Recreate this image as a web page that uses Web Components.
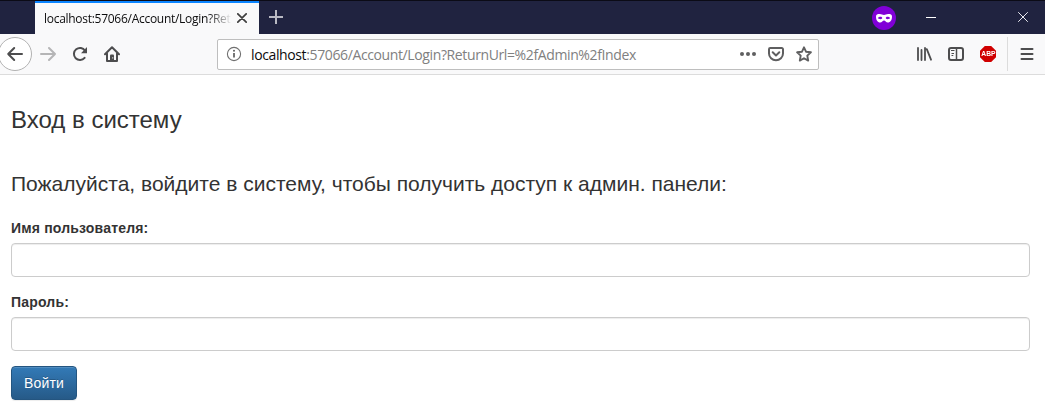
<!DOCTYPE html>
<html lang="ru">
<head>
<meta charset="utf-8">
<title>Вход в систему</title>
<style>
html, body { margin: 0; height: 100%; background: #fff; overflow: hidden; }
body { font-family: "Liberation Sans", Arial, sans-serif; color: #333; }
</style>
</head>
<body>
<browser-window>
  <title-bar slot="chrome"><browser-tab>localhost:57066/Account/Login?Ret</browser-tab></title-bar>
  <nav-bar slot="chrome"><url-field host="localhost" path=":57066/Account/Login?ReturnUrl=%2fAdmin%2fIndex"></url-field></nav-bar>
  <login-form>
    <form-field label="Имя пользователя:"></form-field>
    <form-field label="Пароль:" type="password"></form-field>
    <primary-button>Войти</primary-button>
  </login-form>
</browser-window>
<script>
function define(name, html, setup) {
  customElements.define(name, class extends HTMLElement {
    constructor() {
      super();
      this.attachShadow({ mode: 'open' }).innerHTML = html;
    }
    connectedCallback() { if (setup) setup(this, this.shadowRoot); }
  });
}

const icons = {
  back: [33, 36, '<circle cx="15" cy="18" r="16.5" fill="#fff" stroke="#b2b2b2"/><path d="M22 18H8.2M14.2 12L8.2 18l6 6" fill="none" stroke="#4d4d4e" stroke-width="2" stroke-linecap="round" stroke-linejoin="round"/>'],
  forward: [16, 16, '<path d="M1 8h14M9 2l6 6-6 6" fill="none" stroke="#b5b5b6" stroke-width="2" stroke-linecap="round" stroke-linejoin="round"/>'],
  reload: [16, 16, '<path d="M12.6 11.8A6 6 0 1 1 13 4.8" fill="none" stroke="#4d4d4e" stroke-width="2" stroke-linecap="round"/><path d="M15 1v6.2H9z" fill="#4d4d4e"/>'],
  home: [16, 16, '<path d="M1 8.2L8 1.3l7 6.9M3 7.5V15h10V7.5" fill="none" stroke="#4d4d4e" stroke-width="2" stroke-linecap="round" stroke-linejoin="round"/><path d="M6 15v-5.5a1 1 0 0 1 1-1h2a1 1 0 0 1 1 1V15z" fill="#4d4d4e"/><path d="M8.3 11.2h.9v1.2h-.9z" fill="#fff"/>'],
  info: [16, 16, '<circle cx="8" cy="8" r="6.6" fill="none" stroke="#707070" stroke-width="1.1"/><path d="M8 7v4.6" stroke="#666" stroke-width="1.8"/><circle cx="8" cy="4.8" r="1.05" fill="#666"/>'],
  dots: [16, 16, '<g fill="#5f5f60"><circle cx="2" cy="8" r="2"/><circle cx="8" cy="8" r="2"/><circle cx="14" cy="8" r="2"/></g>'],
  pocket: [16, 16, '<path d="M2.2 2h11.6a1.2 1.2 0 0 1 1.2 1.2V7.5a7 6.7 0 0 1-14 0V3.2A1.2 1.2 0 0 1 2.2 2zM4.7 6.300L8 9.400l3.300-3.100" fill="none" stroke="#5f5f60" stroke-width="2" stroke-linecap="round" stroke-linejoin="round"/>'],
  star: [16, 16, '<path d="M8 1.300l2 4.400 4.900.6-3.600 3.300.9 5L8 12.200l-4.200 2.400.9-5L1.100 6.300 6 5.700z" fill="none" stroke="#5f5f60" stroke-width="1.900" stroke-linejoin="round"/>'],
  library: [16, 16, '<path d="M2 2v12M5.500 4v10M9 2v12M10.800 3.200L15 13.700" fill="none" stroke="#4d4d4e" stroke-width="1.800" stroke-linecap="round"/>'],
  sidebar: [16, 16, '<rect x="1" y="2" width="14" height="12" rx="2" fill="none" stroke="#4d4d4e" stroke-width="2"/><path d="M8.500 2v12" stroke="#4d4d4e" stroke-width="1.500"/><path d="M3 4.500h3.500M3.500 7.500h2.500M3.500 9.500h1.800" stroke="#4d4d4e"/>'],
  menu: [14, 14, '<path d="M1.500 2h11M1.500 7h11M1.500 12h11" stroke="#4d4d4e" stroke-width="2" stroke-linecap="round"/>'],
  close: [10, 10, '<path d="M.8.8l8.400 8.400M9.200.8L.8 9.200" stroke="#3e3e3e" stroke-width="1.700" stroke-linecap="round"/>'],
  plus: [14, 14, '<path d="M7 0v14M0 7h14" stroke="#b9b9c3" stroke-width="2"/>'],
  mask: [24, 24, '<circle cx="12" cy="12" r="12" fill="#8000d7"/><path fill="#fff" fill-rule="evenodd" d="M4 10.500C4 8.400 5.400 8 7.800 8c1.900 0 2.700 1 4.200 1s2.300-1 4.200-1c2.400 0 3.800.4 3.800 2.500 0 3.600-1.600 6-4.200 6-1.700 0-2.600-2-3.800-2s-2.100 2-3.800 2C5.600 16.500 4 14.100 4 10.500zM8.500 10.800c-1.200 0-2.200.6-2.700 1.300.5.700 1.500 1.100 2.700 1.100s1.700-.5 1.700-1.100c0-.7-.5-1.300-1.700-1.300zm7 0c-1.200 0-1.700.6-1.700 1.300 0 .6.500 1.100 1.700 1.100s2.200-.4 2.700-1.100c-.5-.7-1.500-1.300-2.700-1.300z"/>'],
  minimize: [10, 10, '<path d="M0 4.500h10" stroke="#fff"/>'],
  exit: [10, 10, '<path d="M.2.2l9.600 9.600M9.800.2L.2 9.800" stroke="#e8e8ee" stroke-width="1"/>']
};
customElements.define('ui-icon', class extends HTMLElement {
  connectedCallback() {
    const [w, h, body] = icons[this.getAttribute('name')];
    const root = this.shadowRoot || this.attachShadow({ mode: 'open' });
    root.innerHTML = `<style>:host{display:block;flex:none;width:${w}px;height:${h}px}svg{display:block}</style>
      <svg width="${w}" height="${h}" viewBox="0 0 ${w} ${h}">${body}</svg>`;
  }
});

define('browser-window', `<style>
:host { display: flex; flex-direction: column; height: 100%; }
</style><slot name="chrome"></slot><slot></slot>`);

define('browser-tab', `<style>
:host { display: flex; align-items: center; box-sizing: border-box; width: 224px; height: 33px; padding: 1px 12px 0 9px;
  border-top: 2px solid #0a84ff; background: #f9f9fa; color: #0c0c0d; font: 12px/16px "Open Sans", "Noto Sans", sans-serif; }
.text { flex: 1; min-width: 0; overflow: hidden; white-space: nowrap; letter-spacing: -.28px;
  -webkit-mask-image: linear-gradient(to left, transparent, #000 24px); mask-image: linear-gradient(to left, transparent, #000 24px); }
ui-icon { margin: 0 0 2px 5px; }
</style><span class="text"><slot></slot></span><ui-icon name="close"></ui-icon>`);

define('title-bar', `<style>
:host { display: flex; align-items: center; box-sizing: border-box; flex: none; height: 34px; padding: 0 17px 0 35px;
  border-top: 1px solid #0b0b16; background: #202340; }
.plus { margin: 0 0 1px 10px; }
.mask { margin: 1px 30px 0 auto; }
.min { margin-right: 82px; }
.exit { margin-bottom: 1px; }
</style><slot></slot><ui-icon class="plus" name="plus"></ui-icon><ui-icon class="mask" name="mask"></ui-icon><ui-icon class="min" name="minimize"></ui-icon><ui-icon class="exit" name="exit"></ui-icon>`);

define('adblock-badge', `<style>
:host { display: flex; align-items: center; justify-content: center; flex: none; width: 16px; height: 16px; background: #d00000;
  clip-path: polygon(30% 0, 70% 0, 100% 30%, 100% 70%, 70% 100%, 30% 100%, 0 70%, 0 30%);
  color: #fff; font: bold 8px/16px "Liberation Sans", sans-serif; }
span { flex: none; transform: scaleX(.84); }
</style><span>ABP</span>`);

define('url-field', `<style>
:host { display: flex; align-items: center; box-sizing: border-box; width: 602px; height: 31px; padding: 0 6px 0 8px;
  border: 1px solid #bebebe; border-radius: 2px; background: #fff; font: 14px/20px "Open Sans", "Noto Sans", sans-serif; }
.url { flex: 1; margin-left: 9px; white-space: pre; letter-spacing: -.38px; color: #808080; padding-top: 2px; }
.host { color: #0c0c0d; }
.actions { display: flex; gap: 12px; }
</style><ui-icon name="info"></ui-icon><span class="url"><span class="host"></span><span class="path"></span></span>
<div class="actions"><ui-icon name="dots"></ui-icon><ui-icon name="pocket"></ui-icon><ui-icon name="star"></ui-icon></div>`,
(el, root) => {
  root.querySelector('.host').textContent = el.getAttribute('host');
  root.querySelector('.path').textContent = el.getAttribute('path');
});

define('nav-bar', `<style>
:host { display: flex; align-items: center; box-sizing: border-box; flex: none; height: 41px; padding-right: 11px;
  border-bottom: 1px solid #dcdcdc; background: #f9f9fa; }
.buttons { display: flex; align-items: center; width: 217px; }
.forward { margin-left: 7px; }
.reload, .home { margin-left: 16px; }
.tools { display: flex; align-items: center; gap: 16px; margin-left: auto; }
.divider { width: 1px; height: 34px; margin: 0 -4px 0 -5px; background: #dcdcdc; }
</style>
<div class="buttons"><ui-icon name="back"></ui-icon><ui-icon class="forward" name="forward"></ui-icon><ui-icon class="reload" name="reload"></ui-icon><ui-icon class="home" name="home"></ui-icon></div>
<slot></slot>
<div class="tools"><ui-icon name="library"></ui-icon><ui-icon name="sidebar"></ui-icon><adblock-badge></adblock-badge><span class="divider"></span><ui-icon name="menu"></ui-icon></div>`);

define('login-form', `<style>
:host { display: flex; flex-direction: column; align-items: flex-start; padding: 31px 15px 0 11px; }
h3 { margin: 0; font-size: 24px; line-height: 27px; font-weight: 400; }
h4 { margin: 36px 0 19px; font-size: 21px; line-height: 30px; font-weight: 400; white-space: nowrap; }
</style><h3>Вход в систему</h3><h4>Пожалуйста, войдите в систему, чтобы получить доступ к админ. панели:</h4><slot></slot>`);

define('form-field', `<style>
:host { display: flex; flex-direction: column; align-self: stretch; margin-bottom: 15px; }
label { margin-bottom: 5px; font-size: 14px; line-height: 20px; font-weight: 700; letter-spacing: .18px; }
input { box-sizing: border-box; width: 100%; height: 34px; padding: 6px 12px; border: 1px solid #ccc; border-radius: 4px;
  background: #fff; box-shadow: inset 0 1px 1px rgba(0,0,0,.075); font: 14px "Liberation Sans", sans-serif; outline: 0; }
</style><label for="field"></label><input id="field">`,
(el, root) => {
  root.querySelector('label').textContent = el.getAttribute('label');
  root.querySelector('input').type = el.getAttribute('type') || 'text';
});

define('primary-button', `<style>
:host { display: block; }
button { box-sizing: border-box; width: 66px; height: 34px; padding: 0; border: 1px solid #245580; border-radius: 4px;
  background: linear-gradient(#337ab7, #265a88); box-shadow: inset 0 1px 0 rgba(255,255,255,.15), 0 1px 1px rgba(0,0,0,.075);
  color: #fff; font: 14px/20px "Liberation Sans", sans-serif; letter-spacing: .2px; text-shadow: 0 -1px 0 rgba(0,0,0,.2); }
</style><button><slot></slot></button>`);
</script>
</body>
</html>
